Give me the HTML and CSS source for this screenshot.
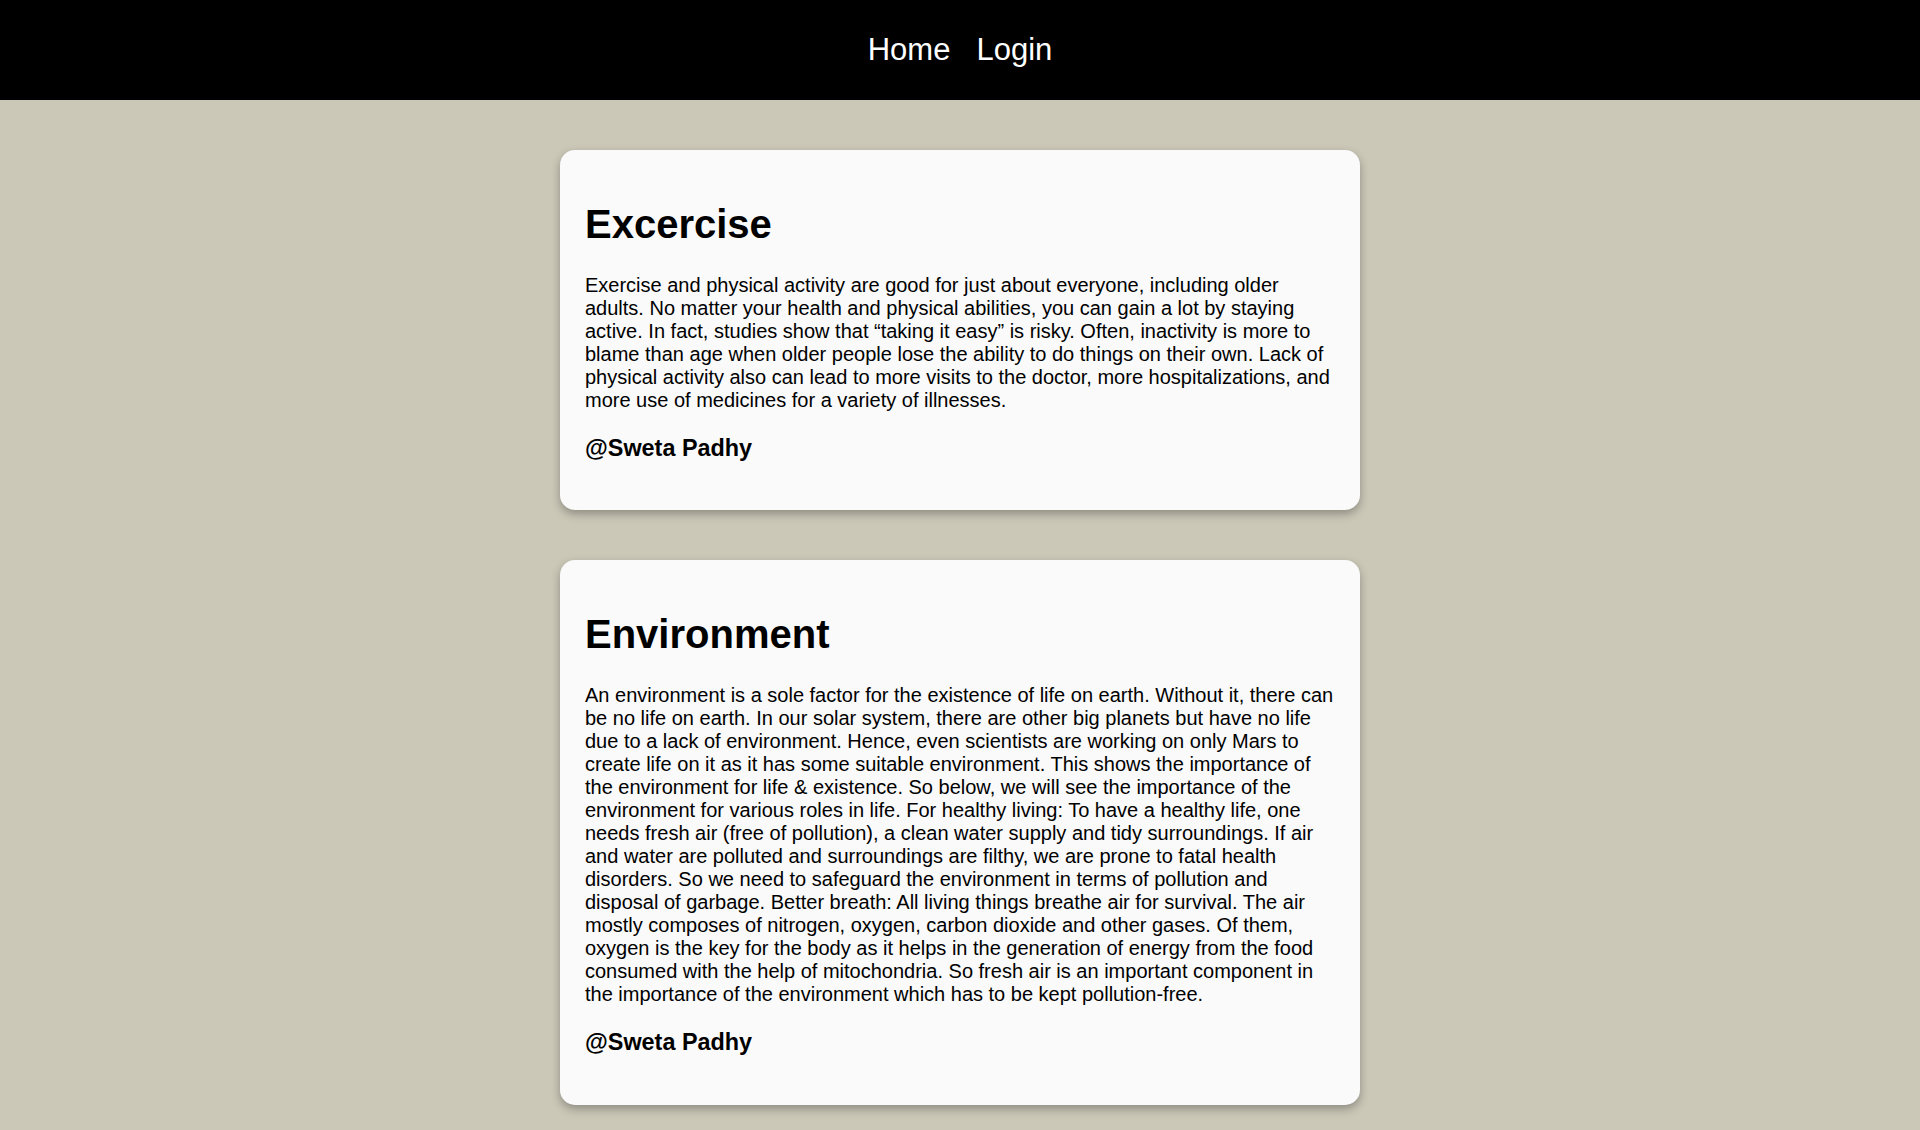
FILE: index.html
```html
<!DOCTYPE html>
<html lang="en">
<head>
<meta charset="utf-8">
<title>Blog</title>
<link rel="stylesheet" href="styles.css">
</head>
<body>
<nav class="navbar">
  <a class="nav-link" href="#">Home</a>
  <a class="nav-link" href="#">Login</a>
</nav>
<main class="posts">
  <article class="card">
    <h1 class="card-title">Excercise</h1>
    <p class="card-text">Exercise and physical activity are good for just about everyone, including older adults. No matter your health and physical abilities, you can gain a lot by staying active. In fact, studies show that “taking it easy” is risky. Often, inactivity is more to blame than age when older people lose the ability to do things on their own. Lack of physical activity also can lead to more visits to the doctor, more hospitalizations, and more use of medicines for a variety of illnesses.</p>
    <h3 class="card-author">@Sweta Padhy</h3>
  </article>
  <article class="card">
    <h1 class="card-title">Environment</h1>
    <p class="card-text">An environment is a sole factor for the existence of life on earth. Without it, there can be no life on earth. In our solar system, there are other big planets but have no life due to a lack of environment. Hence, even scientists are working on only Mars to create life on it as it has some suitable environment. This shows the importance of the environment for life &amp; existence. So below, we will see the importance of the environment for various roles in life. For healthy living: To have a healthy life, one needs fresh air (free of pollution), a clean water supply and tidy surroundings. If air and water are polluted and surroundings are filthy, we are prone to fatal health disorders. So we need to safeguard the environment in terms of pollution and disposal of garbage. Better breath: All living things breathe air for survival. The air mostly composes of nitrogen, oxygen, carbon dioxide and other gases. Of them, oxygen is the key for the body as it helps in the generation of energy from the food consumed with the help of mitochondria. So fresh air is an important component in the importance of the environment which has to be kept pollution-free.</p>
    <h3 class="card-author">@Sweta Padhy</h3>
  </article>
</main>
</body>
</html>
```

FILE: styles.css
```css
html, body {
  margin: 0;
  padding: 0;
}

body {
  background: #cbc8b8;
  font-family: "Liberation Sans", Arial, sans-serif;
  font-size: 20px;
  color: #000;
}

.navbar {
  height: 100px;
  background: #000;
  display: flex;
  justify-content: center;
  align-items: center;
  gap: 26px;
}

.nav-link {
  color: #fff;
  text-decoration: none;
  font-size: 31px;
}

.posts {
  display: flex;
  flex-direction: column;
  align-items: center;
  padding: 50px 0;
  gap: 50px;
}

.card {
  box-sizing: border-box;
  width: 800px;
  padding: 25px;
  background: #fafafa;
  border-radius: 15px;
  box-shadow: 0 4px 10px rgba(0, 0, 0, 0.3);
}

.card-title {
  font-size: 2em;
  font-weight: bold;
  margin: 0.67em 0;
}

.card-text {
  margin: 1em 0;
}

.card-author {
  font-size: 1.17em;
  font-weight: bold;
  margin: 1em 0;
}
```
